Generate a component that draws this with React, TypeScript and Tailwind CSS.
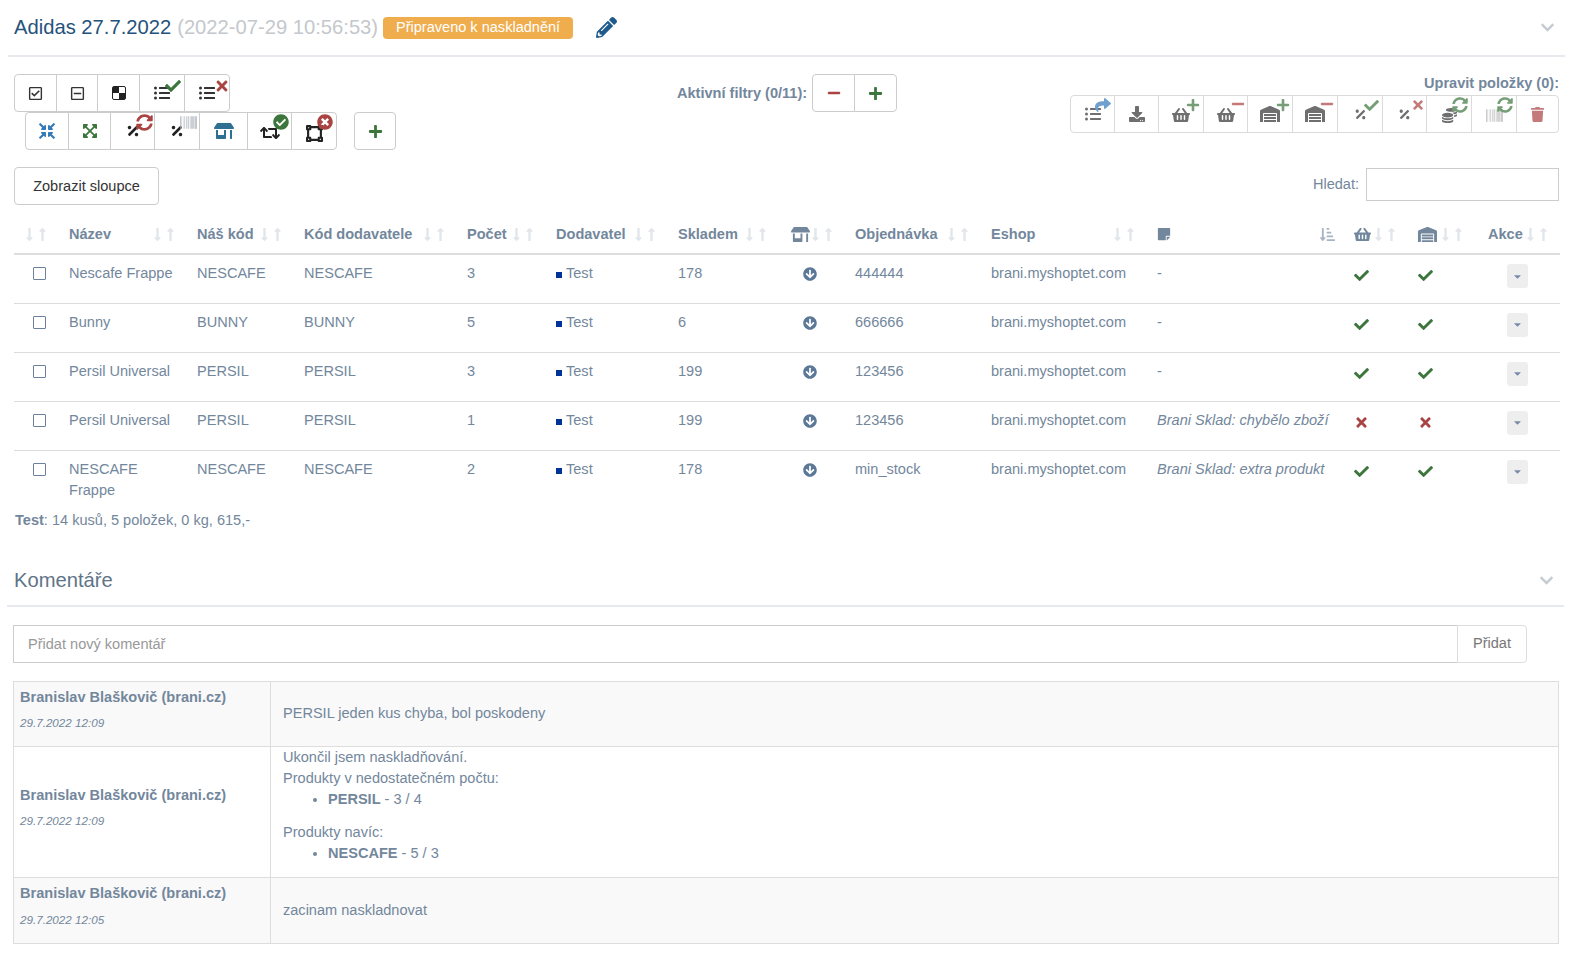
import type { ReactNode } from "react";
import {
  FaArrowCircleDown, FaBarcode, FaCaretDown, FaCheck, FaCheckCircle, FaChevronDown, FaCoins,
  FaCompressArrowsAlt, FaDownload, FaExpandArrowsAlt, FaListUl, FaLongArrowAltDown, FaLongArrowAltUp,
  FaMinus, FaPencilAlt, FaPercentage, FaPlus, FaRegCheckSquare, FaRegMinusSquare, FaRetweet, FaShare,
  FaShoppingBasket, FaSortAmountDownAlt, FaStickyNote, FaStoreAlt, FaSyncAlt, FaTimes, FaTimesCircle,
  FaTrash, FaVectorSquare, FaWarehouse,
} from "react-icons/fa";

function Btn({ w, children }: { w: string; children: ReactNode }) {
  return (
    <button className={`relative flex h-[38px] ${w} -ml-px items-center justify-center border border-[#ccc] bg-white first:ml-0 first:rounded-l-[4px] last:rounded-r-[4px]`}>
      {children}
    </button>
  );
}

function Sort({ active }: { active?: boolean }) {
  if (active)
    return <FaSortAmountDownAlt className="absolute right-[9px] top-[12px] text-[15px] text-[#a9b4c2]" />;
  return (
    <span className="absolute right-[9px] top-[12px] flex text-[15px] text-[#e2e6ea]">
      <FaLongArrowAltDown className="-mr-[2px]" />
      <FaLongArrowAltUp />
    </span>
  );
}

function Th({ w, children, active }: { w: string; children?: ReactNode; active?: boolean }) {
  return (
    <th className={`${w} relative h-[39px] border-b-2 border-[#ddd] pl-[10px] text-left align-middle font-bold`}>
      {children}
      <Sort active={active} />
    </th>
  );
}

type Row = { name: string; our: string; sup: string; qty: string; stock: string; order: string; note?: string; ok: boolean };

const rows: Row[] = [
  { name: "Nescafe Frappe", our: "NESCAFE", sup: "NESCAFE", qty: "3", stock: "178", order: "444444", ok: true },
  { name: "Bunny", our: "BUNNY", sup: "BUNNY", qty: "5", stock: "6", order: "666666", ok: true },
  { name: "Persil Universal", our: "PERSIL", sup: "PERSIL", qty: "3", stock: "199", order: "123456", ok: true },
  { name: "Persil Universal", our: "PERSIL", sup: "PERSIL", qty: "1", stock: "199", order: "123456", note: "Brani Sklad: chybělo zboží", ok: false },
  { name: "NESCAFE Frappe", our: "NESCAFE", sup: "NESCAFE", qty: "2", stock: "178", order: "min_stock", note: "Brani Sklad: extra produkt", ok: true },
];

function Mark({ ok }: { ok: boolean }) {
  return ok ? (
    <FaCheck className="mt-[5px] text-[15px] text-[#3c763d]" />
  ) : (
    <FaTimes className="mt-[5px] text-[15px] text-[#a94442]" />
  );
}

function Author({ date }: { date: string }) {
  return (
    <td className="w-[257px] border border-[#ddd] px-[6px] align-middle">
      <div className="font-bold">Branislav Blaškovič (brani.cz)</div>
      <div className="mb-[9px] mt-[7.5px] text-[11.65px] italic leading-4">{date}</div>
    </td>
  );
}

export default function App() {
  return (
    <div className="w-[1578px] bg-white font-['Liberation_Sans',Arial,sans-serif] text-[14.56px] leading-[21px] text-[#73879c]">
      {/* title */}
      <div className="mx-[8px] flex h-[57px] w-[1557px] items-center border-b-2 border-[#e6e9ed] pl-[6px] pr-[10px]">
        <span className="text-[20.2px] text-[#25527a]">Adidas 27.7.2022</span>
        <span className="ml-[6px] text-[20.2px] text-[#c4c8cc]">(2022-07-29 10:56:53)</span>
        <span className="ml-[5px] flex h-[22px] w-[190px] items-center justify-center rounded-[4px] bg-[#f0ad4e] text-white">Připraveno k naskladnění</span>
        <FaPencilAlt className="ml-[23px] text-[21px] text-[#1f5a8c]" />
        <FaChevronDown className="ml-auto text-[15px] text-[#c5cbd3]" />
      </div>

      {/* toolbars */}
      <div className="flex h-[158px] items-start pl-[14px] pr-[19px] pt-[17px]">
        <div className="w-[663px]">
          <div className="flex">
            <Btn w="w-[43px]"><FaRegCheckSquare className="text-[15px] text-[#333]" /></Btn>
            <Btn w="w-[42px]"><FaRegMinusSquare className="text-[15px] text-[#333]" /></Btn>
            <Btn w="w-[43px]">
              <svg width="14" height="14" viewBox="0 0 14 14">
                <rect x="0.5" y="0.5" width="13" height="13" rx="1.5" fill="#fff" stroke="#222" />
                <rect x="1" y="1" width="6" height="6" fill="#222" />
                <rect x="7" y="7" width="6" height="6" fill="#222" />
              </svg>
            </Btn>
            <Btn w="w-[46px]">
              <FaListUl className="text-[16px] text-[#333]" />
              <FaCheck className="absolute left-[25px] top-[3px] text-[16px] text-[#3c763d]" />
            </Btn>
            <Btn w="w-[46px]">
              <FaListUl className="text-[16px] text-[#333]" />
              <FaTimes className="absolute left-[29px] top-[3px] text-[16px] text-[#a94442]" />
            </Btn>
          </div>
          <div className="flex">
            <div className="ml-[11px] flex">
              <Btn w="w-[44px]"><FaCompressArrowsAlt className="text-[16px] text-[#337ab7]" /></Btn>
              <Btn w="w-[43px]"><FaExpandArrowsAlt className="text-[16px] text-[#3c763d]" /></Btn>
              <Btn w="w-[45px]">
                <FaPercentage className="text-[14px] text-[#222]" />
                <FaSyncAlt className="absolute left-[25px] top-[1px] text-[17px] text-[#a94442]" />
              </Btn>
              <Btn w="w-[46px]">
                <FaPercentage className="text-[14px] text-[#222]" />
                <FaBarcode className="absolute left-[25px] top-[1px] text-[17px] text-[#aab0b8]" />
              </Btn>
              <Btn w="w-[49px]"><FaStoreAlt className="text-[20px] text-[#2f6f92]" /></Btn>
              <Btn w="w-[45px]">
                <FaRetweet className="mt-[4px] text-[20px] text-[#222]" />
                <FaCheckCircle className="absolute left-[25px] top-[1px] text-[16px] text-[#3c763d]" />
              </Btn>
              <Btn w="w-[46px]">
                <FaVectorSquare className="mt-[4px] text-[17px] text-[#222]" />
                <FaTimesCircle className="absolute left-[25px] top-[1px] text-[16px] text-[#a94442]" />
              </Btn>
            </div>
            <div className="ml-[17px] flex">
              <Btn w="w-[42px]"><FaPlus className="text-[15px] text-[#3c763d]" /></Btn>
            </div>
          </div>
          <button className="mt-[17px] h-[38px] w-[145px] rounded-[4px] border border-[#ccc] bg-white text-[#333]">Zobrazit sloupce</button>
        </div>

        <div className="flex items-center">
          <span className="mr-[5px] font-bold">Aktivní filtry (0/11):</span>
          <div className="flex">
            <Btn w="w-[43px]"><FaMinus className="text-[14px] text-[#a94442]" /></Btn>
            <Btn w="w-[43px]"><FaPlus className="text-[15px] text-[#3c763d]" /></Btn>
          </div>
        </div>

        <div className="ml-auto flex flex-col items-end">
          <span className="-mt-[1px] h-[22px] font-bold">Upravit položky (0):</span>
          <div className="flex opacity-70">
            <Btn w="w-[45px]">
              <FaListUl className="text-[16px] text-[#333]" />
              <FaShare className="absolute left-[24px] top-[1px] text-[16px] text-[#337ab7]" />
            </Btn>
            <Btn w="w-[45px]"><FaDownload className="text-[16px] text-[#333]" /></Btn>
            <Btn w="w-[46px]">
              <FaShoppingBasket className="mt-[1px] text-[18px] text-[#333]" />
              <FaPlus className="absolute left-[27px] top-[2px] text-[14px] text-[#3c763d]" />
            </Btn>
            <Btn w="w-[45px]">
              <FaShoppingBasket className="mt-[1px] text-[18px] text-[#333]" />
              <FaMinus className="absolute left-[27px] top-[1px] text-[14px] text-[#a94442]" />
            </Btn>
            <Btn w="w-[46px]">
              <FaWarehouse className="text-[20px] text-[#333]" />
              <FaPlus className="absolute left-[28px] top-[2px] text-[14px] text-[#3c763d]" />
            </Btn>
            <Btn w="w-[46px]">
              <FaWarehouse className="text-[20px] text-[#333]" />
              <FaMinus className="absolute left-[27px] top-[1px] text-[14px] text-[#a94442]" />
            </Btn>
            <Btn w="w-[46px]">
              <FaPercentage className="text-[13px] text-[#333]" />
              <FaCheck className="absolute left-[26px] top-[2px] text-[15px] text-[#3c763d]" />
            </Btn>
            <Btn w="w-[45px]">
              <FaPercentage className="text-[13px] text-[#333]" />
              <FaTimes className="absolute left-[28px] top-[2px] text-[14px] text-[#a94442]" />
            </Btn>
            <Btn w="w-[46px]">
              <FaCoins className="mt-[3px] text-[15px] text-[#333]" />
              <FaSyncAlt className="absolute left-[25px] top-[1px] text-[16px] text-[#3c763d]" />
            </Btn>
            <Btn w="w-[46px]">
              <FaBarcode className="mt-[3px] text-[17px] text-[#999]" />
              <FaSyncAlt className="absolute left-[25px] top-[1px] text-[16px] text-[#3c763d]" />
            </Btn>
            <Btn w="w-[43px]"><FaTrash className="text-[15px] text-[#a94442]" /></Btn>
          </div>
          <div className="mt-[35px] flex items-center">
            <span className="mr-[7px]">Hledat:</span>
            <input className="h-[33px] w-[193px] border border-[#ccc] bg-white" />
          </div>
        </div>
      </div>

      {/* items */}
      <table className="ml-[14px] w-[1546px] table-fixed">
        <thead>
          <tr>
            <Th w="w-[45px]" />
            <Th w="w-[128px]">Název</Th>
            <Th w="w-[107px]">Náš kód</Th>
            <Th w="w-[163px]">Kód dodavatele</Th>
            <Th w="w-[89px]">Počet</Th>
            <Th w="w-[122px]">Dodavatel</Th>
            <Th w="w-[111px]">Skladem</Th>
            <Th w="w-[66px]"><FaStoreAlt className="ml-[2px] text-[19px]" /></Th>
            <Th w="w-[136px]">Objednávka</Th>
            <Th w="w-[166px]">Eshop</Th>
            <Th w="w-[197px]" active><FaStickyNote className="text-[14px]" /></Th>
            <Th w="w-[64px]"><FaShoppingBasket className="text-[17px]" /></Th>
            <Th w="w-[67px]"><FaWarehouse className="text-[19px]" /></Th>
            <Th w="w-[85px]"><span className="ml-[3px]">Akce</span></Th>
          </tr>
        </thead>
        <tbody>
          {rows.map((r, i) => (
            <tr key={i} className="h-[49px] border-b border-[#ddd] align-top last:border-b-0 [&>td]:px-[10px] [&>td]:pb-[8px] [&>td]:pt-[8px]">
              <td className="!pl-[19px]">
                <input type="checkbox" className="mt-[4px] block size-[13px] appearance-none rounded-[1px] border-[1.5px] border-[#6d819c] bg-white" />
              </td>
              <td>{r.name}</td>
              <td>{r.our}</td>
              <td>{r.sup}</td>
              <td>{r.qty}</td>
              <td>
                <span className="mr-[4px] inline-block size-[6px] bg-[#003399]" />
                Test
              </td>
              <td>{r.stock}</td>
              <td className="!pl-[24px]"><FaArrowCircleDown className="mt-[4px] text-[14px] text-[#5b7896]" /></td>
              <td>{r.order}</td>
              <td>brani.myshoptet.com</td>
              <td className={r.note ? "italic" : ""}>{r.note ?? "-"}</td>
              <td><Mark ok={r.ok} /></td>
              <td><Mark ok={r.ok} /></td>
              <td className="!pl-[32px] !pt-[9px]">
                <button className="flex h-[24px] w-[21px] items-center justify-center rounded-[3px] bg-[#eeeeee]">
                  <FaCaretDown className="text-[11px] text-[#7a8ba8]" />
                </button>
              </td>
            </tr>
          ))}
        </tbody>
      </table>
      <div className="ml-[15px] mt-[1px]"><b>Test</b>: 14 kusů, 5 položek, 0 kg, 615,-</div>

      {/* comments */}
      <div className="ml-[7px] mt-[26px] flex h-[50px] w-[1557px] items-center border-b-2 border-[#e6e9ed] pl-[7px] pr-[10px]">
        <span className="text-[20.2px] text-[#5f7488]">Komentáře</span>
        <FaChevronDown className="ml-auto text-[15px] text-[#c5cbd3]" />
      </div>
      <div className="ml-[13px] mt-[18px] flex h-[38px]">
        <input placeholder="Přidat nový komentář" className="h-full w-[1445px] border border-[#ccc] px-[14px] placeholder:text-[#999]" />
        <button className="-ml-px h-full w-[70px] rounded-r-[4px] border border-[#ddd] bg-white text-[#777]">Přidat</button>
      </div>
      <table className="ml-[13px] mt-[18px] w-[1546px] table-fixed">
        <tbody>
          <tr className="h-[65px] bg-[#f9f9f9]">
            <Author date="29.7.2022 12:09" />
            <td className="border border-[#ddd] px-[12px] align-middle">PERSIL jeden kus chyba, bol poskodeny</td>
          </tr>
          <tr className="h-[131px]">
            <Author date="29.7.2022 12:09" />
            <td className="border border-[#ddd] px-[12px] align-top">
              <div>Ukončil jsem naskladňování.</div>
              <div>Produkty v nedostatečném počtu:</div>
              <ul className="mb-[12px] list-disc pl-[45px]">
                <li><b>PERSIL</b> - 3 / 4</li>
              </ul>
              <div>Produkty navíc:</div>
              <ul className="list-disc pl-[45px]">
                <li><b>NESCAFE</b> - 5 / 3</li>
              </ul>
            </td>
          </tr>
          <tr className="h-[66px] bg-[#f9f9f9]">
            <Author date="29.7.2022 12:05" />
            <td className="border border-[#ddd] px-[12px] align-middle">zacinam naskladnovat</td>
          </tr>
        </tbody>
      </table>
    </div>
  );
}
